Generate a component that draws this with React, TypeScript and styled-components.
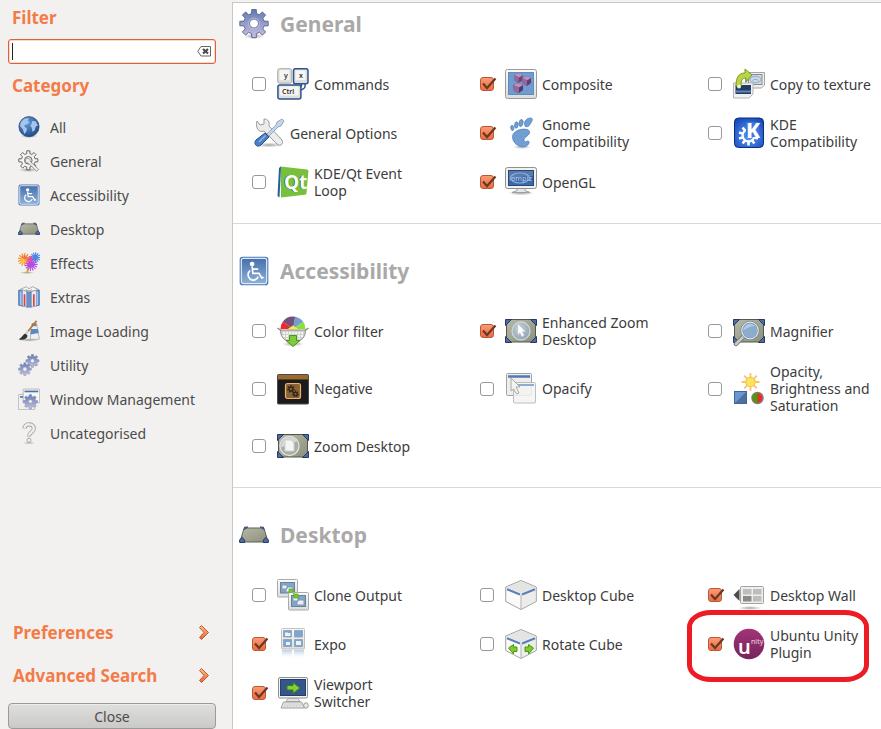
import React, { useState } from "react";
import styled, { createGlobalStyle } from "styled-components";

const GlobalStyle = createGlobalStyle`
  *, *::before, *::after { box-sizing: border-box; }
  body {
    margin: 0;
    background: #f2f1f0;
    color: #3c3c3c;
    font-family: "Noto Sans", "Open Sans", sans-serif;
    font-size: 14px;
    line-height: 17px;
  }
  button, input { font: inherit; color: inherit; }
`;

/* ---------- layout ---------- */

const Window = styled.div`
  display: grid;
  grid-template-columns: 232px minmax(0, 1fr);
  height: 100vh;
  overflow: hidden;
`;

const Sidebar = styled.aside`
  display: flex;
  flex-direction: column;
  padding: 7px 16px 0 8px;
`;

const SideHeading = styled.h2`
  margin: 0;
  padding: 0 4px;
  color: #f37b48;
  font-size: 17px;
  line-height: 22px;
  font-weight: 700;
`;

const SearchBox = styled.div`
  position: relative;
  display: flex;
  align-items: center;
  height: 25px;
  margin: 10px 0 11px;
  padding: 0 4px 0 3px;
  background: #fff;
  border: 1px solid #d8623a;
  border-radius: 3px;
  box-shadow: inset 0 0 0 1px #f9d9cc;
`;

const SearchInput = styled.input`
  flex: 1;
  min-width: 0;
  height: 19px;
  padding: 0 2px;
  border: 0;
  outline: 0;
  background: transparent;
  caret-color: transparent;
`;

const Caret = styled.span`
  position: absolute;
  left: 3px;
  top: 3px;
  width: 1px;
  height: 17px;
  background: #222;
`;

const ClearButton = styled.button`
  display: flex;
  padding: 0;
  border: 0;
  background: none;
`;

const CategoryList = styled.ul`
  list-style: none;
  margin: 13px 0 0;
  padding: 0;
`;

const CategoryButton = styled.button`
  display: flex;
  align-items: center;
  gap: 10px;
  width: 100%;
  height: 34px;
  padding: 0 10px;
  border: 0;
  background: none;
  color: #4c4c4c;
  text-align: left;
  white-space: nowrap;
`;

const SideFooter = styled.div`
  display: flex;
  flex-direction: column;
  margin-top: auto;
`;

const SideLink = styled.button`
  display: flex;
  align-items: center;
  justify-content: space-between;
  height: 43px;
  padding: 0 6px 0 5px;
  border: 0;
  background: none;
  color: #f37b48;
  font-size: 17px;
  line-height: 22px;
  font-weight: 700;
`;

const CloseButton = styled.button`
  height: 26px;
  margin-top: 6px;
  padding: 0;
  border: 1px solid #9b9a99;
  border-radius: 4px;
  background: linear-gradient(#dfdfde, #c9c9c8);
  box-shadow: inset 0 1px 0 #ececeb;
  color: #4c4c4c;
`;

const Main = styled.main`
  margin-top: 2px;
  border-top: 1px solid #c8c7c5;
  border-left: 1px solid #c8c7c5;
  background: #fff;
  overflow: hidden;
`;

const Section = styled.section`
  padding: 32px 2px 24px 5px;
  border-bottom: 1px solid #d9d8d7;
  &:first-child { padding-top: 6px; }
  &:last-child { border-bottom: 0; padding-bottom: 0; }
`;

const SectionTitle = styled.h1`
  display: flex;
  align-items: center;
  gap: 11px;
  height: 30px;
  margin: 0 0 28px;
  padding-left: 1px;
  color: #a9a9a9;
  font-size: 21px;
  line-height: 30px;
  font-weight: 700;
`;

const PluginGrid = styled.div`
  display: grid;
  grid-template-columns: 4fr 4fr 3fr;
  row-gap: 15px;
  padding-left: 14px;
`;

const Plugin = styled.div<{ $marked?: boolean }>`
  position: relative;
  display: flex;
  align-items: center;
  min-height: 34px;
  ${(p) =>
    p.$marked &&
    `&::after {
      content: "";
      position: absolute;
      left: -21px;
      top: -17px;
      right: 10px;
      height: 72px;
      border: 5px solid #ed1c24;
      border-radius: 24px / 17px;
      pointer-events: none;
    }`}
`;

const PluginLabel = styled.label`
  display: flex;
  align-items: center;
  gap: 5px;
`;

const PluginLink = styled.button`
  display: flex;
  align-items: center;
  gap: 5px;
  padding: 0 0 0 1px;
  border: 0;
  background: none;
  text-align: left;
`;

const PluginName = styled.span`
  max-width: 110px;
`;

const CheckFrame = styled.span`
  position: relative;
  display: flex;
  margin-right: 6px;
`;

const CheckInput = styled.input`
  appearance: none;
  width: 14px;
  height: 14px;
  margin: 0;
  border: 1px solid #9a9895;
  border-radius: 3px;
  background: #fff;
  &:checked {
    border-color: #bb5733;
    background: linear-gradient(#fa9a74, #ec6d42);
  }
  &:not(:checked) + svg { display: none; }
`;

const CheckMark = styled.svg`
  position: absolute;
  left: 0;
  top: 0;
  pointer-events: none;
`;

const IconSvg = styled.svg<{ $size: number }>`
  flex: none;
  display: block;
  width: ${(p) => p.$size}px;
  height: ${(p) => p.$size}px;
`;

const HiddenSvg = styled.svg`
  position: absolute;
  width: 0;
  height: 0;
`;

/* ---------- drawing helpers ---------- */

function gear(cx: number, cy: number, outer: number, inner: number, hole: number, teeth: number) {
  const pts: string[] = [];
  const step = (Math.PI * 2) / teeth;
  for (let i = 0; i < teeth; i++) {
    const a = i * step - Math.PI / 2;
    [
      [inner, -0.3],
      [outer, -0.2],
      [outer, 0.2],
      [inner, 0.3],
    ].forEach(([r, o]) => {
      pts.push(`${(cx + r * Math.cos(a + o * step)).toFixed(2)} ${(cy + r * Math.sin(a + o * step)).toFixed(2)}`);
    });
  }
  return `M${pts.join("L")}ZM${cx - hole} ${cy}a${hole} ${hole} 0 1 0 ${hole * 2} 0a${hole} ${hole} 0 1 0 ${-hole * 2} 0Z`;
}

const rays = (cx: number, cy: number, r1: number, r2: number, n: number) =>
  Array.from({ length: n }, (_, i) => {
    const a = (i * Math.PI * 2) / n;
    return `M${(cx + r1 * Math.cos(a)).toFixed(2)} ${(cy + r1 * Math.sin(a)).toFixed(2)}L${(cx + r2 * Math.cos(a)).toFixed(2)} ${(cy + r2 * Math.sin(a)).toFixed(2)}`;
  }).join("");

function wedge(cx: number, cy: number, r: number, from: number, to: number) {
  const p = (deg: number) => {
    const a = (deg * Math.PI) / 180;
    return `${(cx + r * Math.cos(a)).toFixed(2)} ${(cy - r * Math.sin(a)).toFixed(2)}`;
  };
  return `M${cx} ${cy}L${p(from)}A${r} ${r} 0 0 0 ${p(to)}Z`;
}

const Defs = () => (
  <HiddenSvg aria-hidden="true">
    <defs>
      <linearGradient id="gearFill" x1="0" y1="0" x2="0" y2="1">
        <stop offset="0" stopColor="#5f7bb2" />
        <stop offset="1" stopColor="#cbbfe2" />
      </linearGradient>
      <linearGradient id="blueV" x1="0" y1="0" x2="0" y2="1">
        <stop offset="0" stopColor="#4570ab" />
        <stop offset="1" stopColor="#8fb0d8" />
      </linearGradient>
      <linearGradient id="navyV" x1="0" y1="0" x2="0" y2="1">
        <stop offset="0" stopColor="#31548c" />
        <stop offset="1" stopColor="#3a6cb0" />
      </linearGradient>
      <linearGradient id="greyV" x1="0" y1="0" x2="0" y2="1">
        <stop offset="0" stopColor="#fafafa" />
        <stop offset="1" stopColor="#dcdcda" />
      </linearGradient>
      <linearGradient id="deskFill" x1="0" y1="0" x2="1" y2="1">
        <stop offset="0" stopColor="#b6b9a7" />
        <stop offset="1" stopColor="#8b8f7c" />
      </linearGradient>
      <linearGradient id="unityFill" x1="0" y1="0" x2="0" y2="1">
        <stop offset="0" stopColor="#a23478" />
        <stop offset="1" stopColor="#77235a" />
      </linearGradient>
      <linearGradient id="chev" x1="0" y1="0" x2="0" y2="1">
        <stop offset="0" stopColor="#f9c28e" />
        <stop offset="1" stopColor="#ea6337" />
      </linearGradient>
      <linearGradient id="fadeDown" x1="0" y1="0" x2="0" y2="1">
        <stop offset="0" stopColor="#9db9d8" stopOpacity="0.7" />
        <stop offset="1" stopColor="#ffffff" stopOpacity="0" />
      </linearGradient>
      <radialGradient id="globe" cx="0.4" cy="0.3" r="0.75">
        <stop offset="0" stopColor="#6a9bd6" />
        <stop offset="1" stopColor="#1d4586" />
      </radialGradient>
      <radialGradient id="kdeFill" cx="0.5" cy="0.6" r="0.7">
        <stop offset="0" stopColor="#5d9cff" />
        <stop offset="1" stopColor="#1446b4" />
      </radialGradient>
      <radialGradient id="lens" cx="0.4" cy="0.35" r="0.7">
        <stop offset="0" stopColor="#c4d3df" />
        <stop offset="1" stopColor="#8fa6b4" />
      </radialGradient>
      <radialGradient id="shadow">
        <stop offset="0" stopColor="#000" stopOpacity="0.35" />
        <stop offset="1" stopColor="#000" stopOpacity="0" />
      </radialGradient>
    </defs>
  </HiddenSvg>
);

const DeskSurface = () => (
  <>
    <rect x="1.5" y="4.500" width="29" height="22.500" rx="1" fill="url(#deskFill)" stroke="#55584c" />
    <path
      d="M0.500 4.500h6l-6 6zM31.500 4.500h-6l6 6zM0.500 27.500h6l-6-6zM31.500 27.500h-6l6-6z"
      fill="#4a6da6"
      stroke="#243a63"
    />
  </>
);

const Cube = () => (
  <>
    <path d="M0.700 8L16 1.500 31.300 8v14.500L16 30.500 0.700 22.500z" fill="#f1f1f0" stroke="#a3a3a1" strokeLinejoin="round" />
    <path d="M2 8.200L16 2.300l14 5.900-14 6z" fill="#e4e4e3" />
    <path d="M1.800 10l13.700 6v13.500L1.800 22z" fill="#fafafa" />
    <path d="M30.200 10l-13.700 6v13.500L30.200 22z" fill="#ececeb" />
    <path d="M2 10.200l13 5.300M30 10.200L17 15.500" stroke="#587fb8" strokeWidth="2" />
    <path d="M16 15.500v15" stroke="#b4b4b2" />
  </>
);

const Monitor = () => (
  <>
    <ellipse cx="16" cy="27" rx="13" ry="2.500" fill="url(#shadow)" />
    <path d="M7 26.500l5-2v-2h8v2l5 2z" fill="#e6e6e4" stroke="#a0a09e" />
    <rect x="0.500" y="1.500" width="31" height="21" rx="2" fill="#f1f1ef" stroke="#90908e" />
    <rect x="3.500" y="4.500" width="25" height="15" fill="url(#navyV)" stroke="#27467a" />
  </>
);

const Wheelchair = () => (
  <>
    <rect x="0.700" y="0.700" width="30.600" height="30.600" rx="3" fill="#4d78b4" />
    <rect x="2.500" y="2.500" width="27" height="27" rx="2" fill="url(#blueV)" stroke="#dfe9f6" strokeWidth="1.300" />
    <circle cx="14" cy="8.500" r="2.500" fill="#fff" />
    <path d="M14 11l0.800 7.500h6.500l3 5 2-0.800M14.500 14h6" fill="none" stroke="#fff" strokeWidth="1.800" />
    <path d="M12 15.500a5.600 5.600 0 1 0 8.500 6.500" fill="none" stroke="#fff" strokeWidth="1.800" />
  </>
);

const DesktopShape = () => (
  <>
    <path d="M7 8.500h18q1.500 0 2 1.500l4 13.500H1L5 10q0.500-1.500 2-1.500z" fill="url(#deskFill)" stroke="#5a5d50" />
    <path d="M5 10.500l1-3h3.500zM27 10.500l-1-3h-3.500z" fill="#4a6da6" stroke="#3a5280" />
    <path d="M0.700 24v-3l2.800-2.500L6 21.500V24zM31.300 24v-3l-2.800-2.500-2.500 3V24z" fill="#4a6da6" stroke="#22375e" />
  </>
);

const art: Record<string, React.ReactNode> = {
  all: (
    <>
      <ellipse cx="16" cy="29" rx="13" ry="3" fill="url(#shadow)" />
      <circle cx="16" cy="15.500" r="14.700" fill="url(#globe)" stroke="#24477f" />
      <path d="M4 9l5-5 7-1-2 4 3 2-4 3-3 1-1 2 4 3-1 5-3 3-2-7-4-4zM21 7l5 1 3 6-3 1-2 6-3 2-1-6-2-3 2-4z" fill="#a4c5ee" />
    </>
  ),
  gearTool: (
    <>
      <ellipse cx="15" cy="29" rx="14" ry="3" fill="url(#shadow)" />
      <path d={gear(15, 15, 14, 10, 5.5, 8)} fill="#f4f4f2" stroke="#60625e" strokeWidth="1.400" fillRule="evenodd" />
      <path d="M11 14c3-4 8-1 7 3l12 11-3 3-12-12c-4 0-5-2-4-5z" fill="#eeeeec" stroke="#858583" strokeWidth="1.200" />
    </>
  ),
  accessibility: <Wheelchair />,
  desktop: <DesktopShape />,
  effects: (
    <>
      <ellipse cx="13" cy="30" rx="11" ry="2" fill="url(#shadow)" />
      <path d="M13 31l3-11" stroke="#e0a548" strokeWidth="3" />
      <path d={rays(9, 11, 0, 9.5, 13)} stroke="#f8912f" strokeWidth="1.800" />
      <path d={rays(19, 18, 0, 9.5, 15)} stroke="#b54ae6" strokeWidth="1.600" />
      <path d={rays(25, 8, 0, 7.5, 13)} stroke="#4c86e8" strokeWidth="1.700" />
      <path d={rays(10, 9, 0, 5, 7)} stroke="#f0503a" strokeWidth="1.200" />
      <path d={rays(18, 10, 0, 4.500, 7)} stroke="#f0428e" strokeWidth="1.500" />
      <path d={rays(8, 13, 0, 5, 9)} stroke="#ffcf4c" strokeWidth="1.300" />
    </>
  ),
  extras: (
    <>
      <path d="M1 6l14 3v22L1 28zM31 6L17 9v22l14-3z" fill="#6c9ad0" stroke="#2e5a97" />
      <path d="M7 7l5 1v22l-5-1zM20 8l6-1v22l-6 1z" fill="#e9eef4" />
      <path d="M9.500 12v17M23 12v17" stroke="#e0433c" strokeWidth="2.500" />
      <path d="M3 5l9-4 4 3 5-3 9 4-12 3z" fill="#f4f4f2" stroke="#8a8a88" />
      <path d="M12 5c2 3 5 3 8 0" fill="none" stroke="#777" />
      <path d="M4 8v20M28 8v20" stroke="#a9c8ee" strokeWidth="2" />
    </>
  ),
  image: (
    <>
      <ellipse cx="16" cy="29" rx="15" ry="2.500" fill="url(#shadow)" />
      <path d="M21 5h6l1 6 3 17H18l1-17z" fill="#eef0f3" stroke="#9c9fa3" />
      <path d="M19 13h10l1 6-12 2z" fill="#5c88c2" />
      <path d="M20 5h7v4h-7z" fill="#5c87c3" />
      <path d="M27 1L14 17" stroke="#c27423" strokeWidth="2.500" />
      <path d="M15 16l-5 6" stroke="#d0d0ce" strokeWidth="3.500" />
      <path d="M11 20c-4 0-5 6-10 8 6 2 12 0 13-5z" fill="#2e3436" />
    </>
  ),
  utility: (
    <>
      <path d={gear(21, 10, 9.5, 7, 3, 8)} fill="url(#gearFill)" stroke="#8390b4" fillRule="evenodd" />
      <path d={gear(10, 22, 9.5, 7, 3, 8)} fill="url(#gearFill)" stroke="#9aa0c2" fillRule="evenodd" />
    </>
  ),
  windows: (
    <>
      <rect x="0.500" y="9.500" width="24" height="22" rx="1" fill="#f1f1f0" stroke="#a3a3a1" />
      <path d="M3 13h6" stroke="#4a73b0" strokeWidth="2.500" />
      <rect x="7.500" y="1.500" width="24" height="20" rx="1" fill="#f7f7f6" stroke="#a3a3a1" />
      <path d="M9.500 5h20" stroke="#4a73b0" strokeWidth="2.500" />
      <path d={gear(18, 20, 10.5, 8, 3, 8)} fill="url(#gearFill)" stroke="#9098ba" fillRule="evenodd" />
    </>
  ),
  question: (
    <>
      <ellipse cx="16" cy="30.500" rx="10" ry="1.500" fill="url(#shadow)" />
      <path d="M9.500 9.500c0-8 13.500-8 13.500 0 0 5.500-7 5-7 11.500" fill="none" stroke="#a2a3a0" strokeWidth="6" />
      <path d="M9.500 9c0-7.500 13.500-7.500 13.500 0.500 0 5.500-7 5-7 10.500" fill="none" stroke="#efefed" strokeWidth="3.600" />
      <circle cx="16" cy="26.500" r="3" fill="#efefed" stroke="#a2a3a0" strokeWidth="1.300" />
    </>
  ),
  gear: (
    <>
      <ellipse cx="16" cy="29" rx="11" ry="3" fill="url(#shadow)" />
      <path d={gear(16, 15.500, 15.300, 11, 4.8, 8)} fill="url(#gearFill)" stroke="#5b658c" strokeLinejoin="round" fillRule="evenodd" />
      <circle cx="16" cy="15.500" r="5.800" fill="none" stroke="#b9c1dd" strokeWidth="1" />
    </>
  ),
  commands: (
    <>
      <rect x="0.700" y="0.700" width="14" height="14.500" rx="2" fill="#dededa" stroke="#aaaaa5" />
      <rect x="2.500" y="2" width="10" height="10" rx="1" fill="#f5f5f2" />
      <rect x="16.500" y="0.700" width="14.500" height="15" rx="2" fill="#dededa" stroke="#2c5391" strokeWidth="1.500" />
      <rect x="18.500" y="2.500" width="10" height="9.500" rx="1" fill="#f5f5f2" />
      <path d="M28 16c1 5-2 5-4 6M24.500 16c0 2 0 3-1 3" fill="none" stroke="#2c5391" strokeWidth="1.500" />
      <rect x="0.900" y="17" width="23" height="14" rx="2" fill="#dededa" stroke="#2c5391" strokeWidth="1.500" />
      <rect x="3" y="18.500" width="18.500" height="9" rx="1" fill="#f5f5f2" />
      <text x="7" y="9.500" fontSize="7" fontWeight="600" fill="#333">y</text>
      <text x="22" y="9.500" fontSize="7" fontWeight="600" fill="#333">x</text>
      <text x="5" y="26" fontSize="7" fontWeight="600" fill="#333">Ctrl</text>
    </>
  ),
  tools: (
    <>
      <ellipse cx="16" cy="28" rx="14" ry="2.500" fill="url(#shadow)" />
      <path d="M4 4l3 4 4-1V2c4 0 6 3 5 7l13 14c2 4-2 7-5 4L11 14C6 16 2 11 4 4z" fill="#ececea" stroke="#999997" />
      <path d="M29 2l2 2-3 5-3 1-9 9-2-2 9-9 1-3z" fill="#c4d4ea" stroke="#93a9c6" />
      <path d="M12 16l4 4-8 8c-4 3-8-1-5-5z" fill="#4a80c8" stroke="#244f8f" />
      <path d="M12.500 18.500L6 25" stroke="#92b6e4" strokeWidth="1.500" />
    </>
  ),
  qt: (
    <>
      <path d="M3.500 0.500l26.500 3q1.500 0.200 1.400 1.500L29.500 27q-0.200 1.500-1.500 1.800L4 31.500z" fill="#78c03c" />
      <path d="M4 0.500L2.500 31.500 0.500 30 2 2z" fill="#225f9e" />
      <text x="6" y="23" fontSize="19" fontFamily="Open Sans" fontWeight="700" fill="#2a7a4e">Qt</text>
      <text x="7" y="23" fontSize="19" fontFamily="Open Sans" fontWeight="700" fill="#fff">Qt</text>
    </>
  ),
  composite: (
    <>
      <rect x="0.500" y="1.500" width="31" height="29" rx="2" fill="url(#greyV)" stroke="#9a9a98" />
      <rect x="3.500" y="4.500" width="25" height="22" fill="#6f9cce" stroke="#5f8cc0" />
      <path d="M9 7l5-2 4 2-1 6-4 2-4-3z" fill="#6f4479" />
      <path d="M17 10l5-2 4 2 0 5-4 3-5-3z" fill="#653a70" />
      <path d="M8 17l5-2 5 2 0 5-4 3-5-2z" fill="#5c3566" />
      <path d="M9 7l5-2 4 2-4 2.500zM17 10l5-2 4 2-4 2.500zM8 17l5-2 5 2-4 2.500z" fill="#b893c2" />
      <path d="M9 7l5 2.500-1 5.500-4-3zM17 10l5 2.500V18l-5-3zM8 17l6 2.500V25l-5-2z" fill="#8f6a9a" />
    </>
  ),
  gnome: (
    <>
      <ellipse cx="17" cy="30" rx="9" ry="2" fill="url(#shadow)" />
      <g fill="#709fd3" stroke="#5482ba" strokeWidth="0.800">
        <path d="M26.500 1.200c-4-1-7.500 3-7 6.300.5 3.500 4 2.500 5.500 0s3.500-5.500 1.500-6.300z" />
        <ellipse cx="16" cy="6" rx="2" ry="3.500" transform="rotate(14 16 6)" />
        <ellipse cx="11.300" cy="8" rx="1.700" ry="3.200" transform="rotate(6 11.300 8)" />
        <ellipse cx="7.300" cy="11" rx="1.500" ry="2.600" transform="rotate(-12 7.300 11)" />
        <path d="M7.500 19.500C8 12 23 10 24.500 14.500c1 4-5.500 5-5.500 8.500 0 2.200 2 2.200 3 1.200 1-0.800 2.500 0 2 1.800-1 3.500-5 4-8 3.500-5-1-8.500-5-8.500-10z" />
      </g>
    </>
  ),
  opengl: (
    <>
      <Monitor />
      <path d="M4 5h24v5c-8 0-15 1-24 5z" fill="#7a9bcb" opacity="0.5" />
      <ellipse cx="15" cy="12" rx="9.500" ry="5" fill="none" stroke="#93b0d8" strokeWidth="1.200" />
      <text x="6" y="14.500" fontSize="7" fontWeight="600" fill="#9fbae0">ompiz</text>
    </>
  ),
  copyTexture: (
    <>
      <path d="M12.500 4.500h19V17l-3 3h-16z" fill="#efeeeb" stroke="#a4a4a2" />
      <rect x="15.500" y="6.500" width="13.500" height="10" fill="#cfdae6" stroke="#8b8b89" />
      <ellipse cx="22.500" cy="11.500" rx="5.500" ry="3.200" fill="none" stroke="#85a6d0" />
      <path d="M19.500 12.500q3-3 6 0" fill="none" stroke="#85a6d0" />
      <path d="M0.500 15h19.500v11l-4 4H0.500z" fill="#f0f0ee" stroke="#b4b4b2" />
      <path d="M2.500 17h15.500v9H2.500z" fill="#243c62" />
      <path d="M2.500 22.500h15.500v2H2.500z" fill="#5d86ba" />
      <path d="M3 18C3 9 6 5 12 5V1l7 6-6 7v-4c-4 0-5 2-5 8z" fill="#b9d545" stroke="#7b9a1c" />
      <circle cx="6" cy="18.500" r="2" fill="#eef5c4" />
    </>
  ),
  kde: (
    <>
      <rect x="1.500" y="1" width="29" height="29.500" rx="4" fill="url(#kdeFill)" stroke="#0c2f7d" />
      <path d={gear(15.500, 18.500, 10, 7, 4.800, 10)} fill="#fff" fillRule="evenodd" />
      <path d="M13 5h13v15H13z" fill="#3e76dd" />
      <text x="13" y="21" fontSize="21" fontWeight="800" fill="#fff">K</text>
    </>
  ),
  colorFilter: (
    <>
      <ellipse cx="16" cy="29" rx="11" ry="2.500" fill="url(#shadow)" />
      <path d={wedge(16, 14, 12.500, 0, 35)} fill="#8ae234" />
      <path d={wedge(16, 14, 12.500, 35, 80)} fill="#729fcf" />
      <path d={wedge(16, 14, 12.500, 80, 145)} fill="#75507b" />
      <path d={wedge(16, 14, 12.500, 145, 180)} fill="#ef2929" />
      <path d="M16 10.500l6 4H10z" fill="#fce94f" />
      <path d="M3.500 15h25c0 9-6 12-12.500 12S3.500 24 3.500 15z" fill="#d2d2d0" stroke="#8d8d8b" />
      <path d="M0.500 13l3.500 2.500M31.500 13L28 15.500" stroke="#888" strokeWidth="1.500" />
      <path d="M7 17v5M10 17v7M13 17v3M16 17v2M19 17v3M22 17v7M25 17v5" stroke="#fff" strokeWidth="1.500" strokeDasharray="2 1" />
      <path d="M12.500 20.500h7v5h3.500L16 31.500 9 25.500h3.500z" fill="#7ccb40" stroke="#4b9614" />
    </>
  ),
  negative: (
    <>
      <rect x="0.500" y="1.500" width="31" height="29.500" rx="1" fill="#1b1b1e" stroke="#4a4a4c" />
      <path d="M1 2h30v5H1z" fill="#9a6a32" />
      <path d="M1 6.500h30" stroke="#5f3d15" />
      <rect x="8.500" y="10.500" width="15" height="15" rx="2" fill="#8c6230" stroke="#e9b36b" strokeWidth="1.200" />
      <path d={gear(14, 16, 4, 2.700, 1.200, 7)} fill="#2d2820" fillRule="evenodd" />
      <path d={gear(18.500, 21, 3.500, 2.400, 1, 7)} fill="#2d2820" fillRule="evenodd" />
    </>
  ),
  zoomDesktop: (
    <>
      <DeskSurface />
      <circle cx="12.500" cy="16" r="9.500" fill="#a9aea4" stroke="#dfe2de" strokeWidth="1.300" />
      <path d="M4 16a8.500 8.500 0 0 1 8.500-8.500c3 0 6 1 7 4-5 1-10 4-15 6z" fill="#d3d8d6" />
      <path d="M8 10h6l3 3v8H8z" fill="#f4f5f5" stroke="#cfd2d2" />
    </>
  ),
  enhancedZoom: (
    <>
      <DeskSurface />
      <circle cx="16" cy="16" r="9" fill="url(#lens)" opacity="0.9" stroke="#d3dce2" strokeWidth="1.300" />
      <path d="M13 9l7 7.500h-3l2 4-2 1-2-4-2 2z" fill="#fff" stroke="#d8dcde" strokeWidth="0.500" />
    </>
  ),
  magnifier: (
    <>
      <DeskSurface />
      <path d="M10.500 21.500L3 29" stroke="#747673" strokeWidth="4.500" strokeLinecap="round" />
      <path d="M10.500 21.500L3 29" stroke="#c9cbc8" strokeWidth="2.500" strokeLinecap="round" />
      <circle cx="17" cy="15.500" r="8.500" fill="#8aaccd" stroke="#6d7f8f" strokeWidth="2" />
      <circle cx="17" cy="15.500" r="8.300" fill="none" stroke="#dfe7ee" strokeWidth="1.200" />
      <path d="M10.500 15.500a6.500 6.500 0 0 1 6.500-6.500c3 0 4 1 5 2-4 0-8 2-11.500 4.500z" fill="#b3cae1" />
    </>
  ),
  opacify: (
    <>
      <rect x="1.500" y="0.500" width="25" height="22" rx="1" fill="#eeeeed" stroke="#a3a3a1" />
      <path d="M3 3.500h22" stroke="#5079b5" strokeWidth="2.500" />
      <rect x="8.500" y="9.500" width="22" height="20.500" rx="1" fill="#f3f3f2" fillOpacity="0.85" stroke="#bebebc" />
      <path d="M13 12h16" stroke="#8eacd4" strokeWidth="2" />
      <path d="M6 5l9 9h-4l3 6-2.500 1-3-5L6 18z" fill="#f3f3f2" stroke="#a9a9a7" />
    </>
  ),
  obs: (
    <>
      <path d={rays(17.500, 9, 4, 9, 8)} stroke="#f9c274" strokeWidth="1.800" />
      <circle cx="17.500" cy="9" r="4.800" fill="#fce35a" stroke="#f3c04a" />
      <rect x="1.500" y="18.500" width="12" height="12" fill="#6a98d0" stroke="#3e659c" />
      <path d="M13 19v11H2z" fill="#4f6f9c" />
      <circle cx="24.500" cy="25" r="5.500" fill="#ef2929" stroke="#7d7d7b" strokeWidth="1.500" />
      <path d="M24.500 20a5 5 0 0 0 0 10z" fill="#4e9a06" />
    </>
  ),
  clone: (
    <>
      <rect x="0.500" y="0.500" width="20" height="17.500" rx="1" fill="url(#greyV)" stroke="#aaaaa8" />
      <rect x="3.500" y="3.500" width="14" height="10.500" fill="#7fa5d1" stroke="#6c7f96" />
      <path d="M5 6h5v4H5zM11 8h5v5h-7v-3z" fill="#eceff2" stroke="#8399b3" />
      <rect x="11.500" y="13.500" width="20" height="17.500" rx="1" fill="url(#greyV)" stroke="#aaaaa8" />
      <rect x="14.500" y="16.500" width="14" height="11" fill="#7fa5d1" stroke="#6c7f96" />
      <path d="M16 18h5v4h-5zM21 21h6v5h-7v-3z" fill="#eceff2" stroke="#8399b3" />
      <path d="M12 10h4v3h-2l-2 1zM17 15h4l1 4h-5z" fill="#73c82f" stroke="#5aa51c" strokeWidth="0.700" />
      <path d="M14 12l6 6" stroke="#73c82f" strokeWidth="1.500" strokeDasharray="2 1" />
    </>
  ),
  expo: (
    <>
      <rect x="4.500" y="0.500" width="23" height="20.500" rx="1" fill="url(#greyV)" stroke="#c0c0be" />
      <path d="M6.500 2.500h8v6.500h-8zM17.500 2.500h8v6.500h-8zM6.500 11.500h8v7h-8zM17.500 11.500h8v7h-8z" fill="#7ba5d3" stroke="#93a5ba" />
      <path d="M8 4.500h3V8H8zM11 5h2.500v3H11zM9 14h4v3H9zM19 13h5v4h-5z" fill="#eef1f5" />
      <path d="M5 22h22v9H5z" fill="url(#fadeDown)" />
      <path d="M16 22v8" stroke="#fff" strokeWidth="2" />
    </>
  ),
  viewport: (
    <>
      <rect x="1.500" y="0.500" width="29" height="20.500" rx="1.500" fill="#f3f3f1" stroke="#8f8f8d" />
      <rect x="3.500" y="2.500" width="25" height="16" fill="#35568c" stroke="#243f6c" />
      <path d="M10 8.500h6v-3l7 5.500-7 5.500v-3.500h-6z" fill="#7bd03c" stroke="#3e7d0d" />
      <path d="M11 21.500h10l2 3H9z" fill="#e2e2e0" stroke="#acacaa" />
      <path d="M6.500 25h18l3 6H4z" fill="#f1f1ef" stroke="#9b9b99" />
      <path d="M7.500 27h17M6.500 29h19" stroke="#b0b0ae" strokeDasharray="2 1" />
      <ellipse cx="29" cy="28.500" rx="2.300" ry="2.800" fill="#e8e8e6" stroke="#9b9b99" />
    </>
  ),
  cube: <Cube />,
  rotate: (
    <>
      <Cube />
      <path d="M3.500 20l5-3.500V19h3.500v4.500H8.500V26zM28.500 20l-5-3.500V19H20v4.500h3.500V26z" fill="#7acb36" stroke="#4e9a06" />
    </>
  ),
  wall: (
    <>
      <ellipse cx="17" cy="29" rx="12" ry="2" fill="url(#shadow)" />
      <path d="M0.500 16l6-6v12z" fill="#4b4d49" />
      <rect x="7.500" y="7.500" width="23" height="17" rx="1" fill="#eeeeec" stroke="#a3a3a1" />
      <path d="M10 10h8.500v5.500H10zM20 10h8.500v5.500H20zM20 17h8.500v5.500H20z" fill="#bcbebb" />
      <path d="M10 17h8.500v5.500H10z" fill="#898b88" />
    </>
  ),
  unity: (
    <>
      <circle cx="16" cy="16" r="15.300" fill="url(#unityFill)" />
      <text x="5" y="26" fontSize="20" fontWeight="600" fill="#fff">u</text>
      <text x="18" y="16" fontSize="7" fill="#f0d8e8">nity</text>
    </>
  ),
};

const Icon = ({ name, size = 32 }: { name: string; size?: number }) => (
  <IconSvg $size={size} viewBox="0 0 32 32" aria-hidden="true">
    {art[name]}
  </IconSvg>
);

const Chevron = () => (
  <svg width="12" height="17" viewBox="0 0 12 17" aria-hidden="true">
    <path d="M1.500 3.500L3.500 1.500 10.500 8.500 3.500 15.500 1.500 13.500 6 8.500z" fill="url(#chev)" stroke="#c9552a" strokeLinejoin="round" />
  </svg>
);

/* ---------- content ---------- */

const categories: [string, string][] = [
  ["All", "all"],
  ["General", "gearTool"],
  ["Accessibility", "accessibility"],
  ["Desktop", "desktop"],
  ["Effects", "effects"],
  ["Extras", "extras"],
  ["Image Loading", "image"],
  ["Utility", "utility"],
  ["Window Management", "windows"],
  ["Uncategorised", "question"],
];

interface PluginInfo {
  name: string;
  icon: string;
  on?: boolean;
  always?: boolean;
  marked?: boolean;
}

const sections: { title: string; icon: string; plugins: PluginInfo[] }[] = [
  {
    title: "General",
    icon: "gear",
    plugins: [
      { name: "Commands", icon: "commands" },
      { name: "Composite", icon: "composite", on: true },
      { name: "Copy to texture", icon: "copyTexture" },
      { name: "General Options", icon: "tools", always: true },
      { name: "Gnome Compatibility", icon: "gnome", on: true },
      { name: "KDE Compatibility", icon: "kde" },
      { name: "KDE/Qt Event Loop", icon: "qt" },
      { name: "OpenGL", icon: "opengl", on: true },
    ],
  },
  {
    title: "Accessibility",
    icon: "accessibility",
    plugins: [
      { name: "Color filter", icon: "colorFilter" },
      { name: "Enhanced Zoom Desktop", icon: "enhancedZoom", on: true },
      { name: "Magnifier", icon: "magnifier" },
      { name: "Negative", icon: "negative" },
      { name: "Opacify", icon: "opacify" },
      { name: "Opacity, Brightness and Saturation", icon: "obs" },
      { name: "Zoom Desktop", icon: "zoomDesktop" },
    ],
  },
  {
    title: "Desktop",
    icon: "desktop",
    plugins: [
      { name: "Clone Output", icon: "clone" },
      { name: "Desktop Cube", icon: "cube" },
      { name: "Desktop Wall", icon: "wall", on: true },
      { name: "Expo", icon: "expo", on: true },
      { name: "Rotate Cube", icon: "rotate" },
      { name: "Ubuntu Unity Plugin", icon: "unity", on: true, marked: true },
      { name: "Viewport Switcher", icon: "viewport", on: true },
    ],
  },
];

const PluginEntry = ({ plugin }: { plugin: PluginInfo }) => {
  const [on, setOn] = useState(!!plugin.on);
  return (
    <Plugin $marked={plugin.marked}>
      {plugin.always ? (
        <PluginLink type="button">
          <Icon name={plugin.icon} />
          <span>{plugin.name}</span>
        </PluginLink>
      ) : (
        <PluginLabel>
          <CheckFrame>
            <CheckInput type="checkbox" checked={on} onChange={(e) => setOn(e.target.checked)} />
            <CheckMark width="17" height="14" viewBox="0 0 17 14" aria-hidden="true">
              <path d="M3 6.500l4 4.500 8.500-9.500" fill="none" stroke="#6b3826" strokeWidth="2.200" />
            </CheckMark>
          </CheckFrame>
          <Icon name={plugin.icon} />
          <PluginName>{plugin.name}</PluginName>
        </PluginLabel>
      )}
    </Plugin>
  );
};

export default function App() {
  const [filter, setFilter] = useState("");
  return (
    <>
      <GlobalStyle />
      <Defs />
      <Window>
        <Sidebar>
          <SideHeading>
            <label htmlFor="filter">Filter</label>
          </SideHeading>
          <SearchBox>
            {filter === "" && <Caret />}
            <SearchInput id="filter" value={filter} onChange={(e) => setFilter(e.target.value)} />
            <ClearButton type="button" aria-label="Clear" onClick={() => setFilter("")}>
              <svg width="14" height="11" viewBox="0 0 14 11" aria-hidden="true">
                <path d="M4 0.500h9.500v9.500H4L0.800 5.200z" fill="#fff" stroke="#666" />
                <path d="M6 3l5 4.500M11 3L6 7.500" stroke="#4a4a4a" strokeWidth="2.200" />
              </svg>
            </ClearButton>
          </SearchBox>
          <SideHeading>Category</SideHeading>
          <CategoryList>
            {categories.map(([name, icon]) => (
              <li key={name}>
                <CategoryButton type="button">
                  <Icon name={icon} size={22} />
                  {name}
                </CategoryButton>
              </li>
            ))}
          </CategoryList>
          <SideFooter>
            <SideLink type="button">
              Preferences
              <Chevron />
            </SideLink>
            <SideLink type="button">
              Advanced Search
              <Chevron />
            </SideLink>
            <CloseButton type="button">Close</CloseButton>
          </SideFooter>
        </Sidebar>
        <Main>
          {sections.map((s) => (
            <Section key={s.title}>
              <SectionTitle>
                <Icon name={s.icon} size={30} />
                {s.title}
              </SectionTitle>
              <PluginGrid>
                {s.plugins.map((p) => (
                  <PluginEntry key={p.name} plugin={p} />
                ))}
              </PluginGrid>
            </Section>
          ))}
        </Main>
      </Window>
    </>
  );
}
